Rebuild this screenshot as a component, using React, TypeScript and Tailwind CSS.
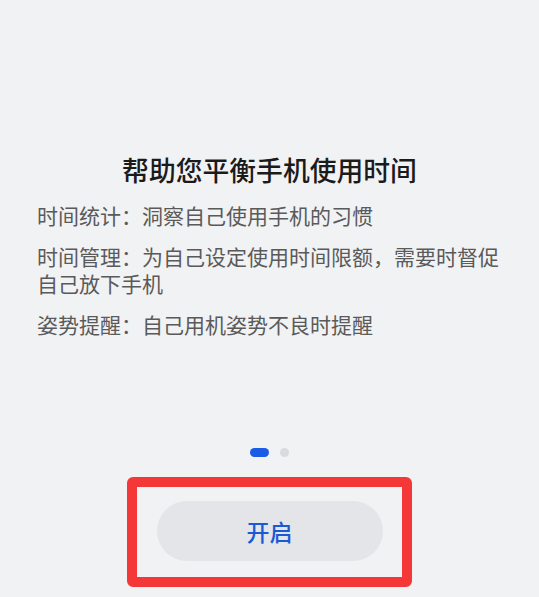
export default function App() {
  const items = [
    "时间统计：洞察自己使用手机的习惯",
    "时间管理：为自己设定使用时间限额，需要时督促自己放下手机",
    "姿势提醒：自己用机姿势不良时提醒",
  ];

  return (
    <div
      className="h-[597px] w-full flex flex-col bg-[#f1f2f4]"
      style={{ fontFamily: '"Noto Sans CJK SC", "Noto Sans", sans-serif' }}
    >
      <h1 className="pt-[153px] text-center text-[26.8px] leading-[34px] font-medium text-[#1b1b1b]">
        帮助您平衡手机使用时间
      </h1>
      <div className="mt-[15px] px-[37px] flex flex-col gap-[14px]">
        {items.map((t) => (
          <p key={t} className="text-[21px] leading-[27px] text-[#5a5a5a]">
            {t}
          </p>
        ))}
      </div>

      <div className="mt-auto flex justify-center items-center gap-[11px]">
        <span className="w-[19px] h-[9px] rounded-full bg-[#1a5ce6]" />
        <span className="w-[9px] h-[9px] rounded-full bg-[#d9dadd]" />
      </div>

      <div className="mt-[20px] mb-[10px] mx-auto w-[285px] border-[10px] border-[#f43838] rounded-[6px] pt-[14px] pb-[16px] flex justify-center">
        <button className="w-[226px] h-[60px] rounded-full bg-[#e4e5e8] text-[23px] text-[#1a5ad6] font-medium">
          开启
        </button>
      </div>
    </div>
  );
}
